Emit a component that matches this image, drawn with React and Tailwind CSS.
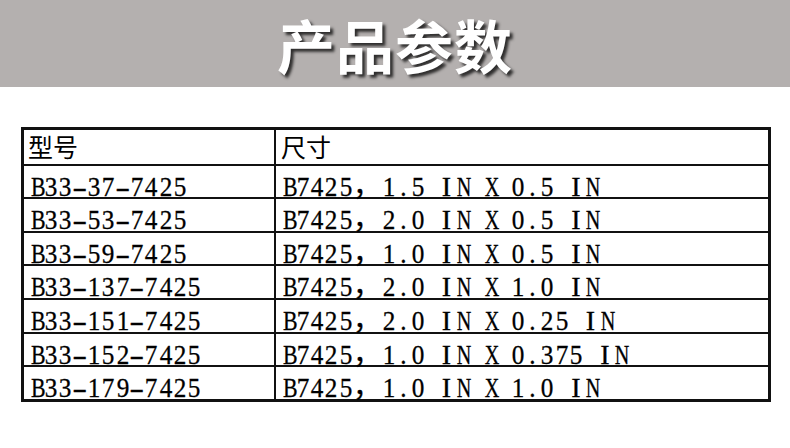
import React from 'react';

const rows = [
  ['B33-37-7425', 'B7425，1.5 IN X 0.5 IN'],
  ['B33-53-7425', 'B7425，2.0 IN X 0.5 IN'],
  ['B33-59-7425', 'B7425，1.0 IN X 0.5 IN'],
  ['B33-137-7425', 'B7425，2.0 IN X 1.0 IN'],
  ['B33-151-7425', 'B7425，2.0 IN X 0.25 IN'],
  ['B33-152-7425', 'B7425，1.0 IN X 0.375 IN'],
  ['B33-179-7425', 'B7425，1.0 IN X 1.0 IN'],
];

const serif = { fontFamily: '"Liberation Serif", "Noto Sans CJK SC", serif' };
const cjk = { fontFamily: '"Noto Sans CJK SC", sans-serif' };

// every glyph squeezed into one half-width cell, like the old SimSun table text
const glyphClass = (ch) => {
  if (ch === '-') return 'inline-block scale-x-[1.6]';
  if (ch === 'I') return 'inline-block';
  if (ch === 'B') return 'inline-block scale-x-[0.78]';
  if (ch === 'N' || ch === 'X') return 'inline-block scale-x-[0.72]';
  return 'inline-block scale-x-[0.9]';
};

const Mono = ({ text }) => (
  <span className="whitespace-pre" style={serif}>
    {Array.from(text).map((ch, i) => {
      if (ch === '，') {
        return (
          <span key={i} className="inline-block w-[28.8px] text-left">
            {ch}
          </span>
        );
      }
      return (
        <span key={i} className="inline-block w-[14.4px] text-center">
          <span className={glyphClass(ch)}>{ch}</span>
        </span>
      );
    })}
  </span>
);

const Row = ({ a, b }) => (
  <div className="flex h-[33.6px] border-t-2 border-[#111]">
    <div className="w-[252px] shrink-0 border-r-2 border-[#111] pl-[5px] pt-[5px] text-[28px] leading-[28px] text-black [-webkit-text-stroke:0.3px_black]">
      <Mono text={a} />
    </div>
    <div className="flex-1 pl-[5px] pt-[5px] text-[28px] leading-[28px] text-black [-webkit-text-stroke:0.3px_black]">
      <Mono text={b} />
    </div>
  </div>
);

export default function App() {
  return (
    <div className="w-[790px] h-[448px] bg-white overflow-hidden">
      <div className="h-[87px] bg-[#b4b0af] flex items-center justify-center">
        <h1
          className="text-[58px] font-bold text-white leading-none tracking-[1px]"
          style={{ ...cjk, textShadow: '3px 3px 3px rgba(0,0,0,0.75)' }}
        >
          产品参数
        </h1>
      </div>

      <div className="ml-[21px] mt-[40px] w-[750px] border-[3px] border-[#111]">
        <div className="flex h-[33.6px]">
          <div
            className="w-[252px] shrink-0 border-r-2 border-[#111] pl-[4px] flex items-center text-[25px] leading-none text-black"
            style={cjk}
          >
            型号
          </div>
          <div
            className="flex-1 pl-[5px] flex items-center text-[25px] leading-none text-black"
            style={cjk}
          >
            尺寸
          </div>
        </div>
        {rows.map(([a, b]) => (
          <Row key={a} a={a} b={b} />
        ))}
      </div>
    </div>
  );
}
